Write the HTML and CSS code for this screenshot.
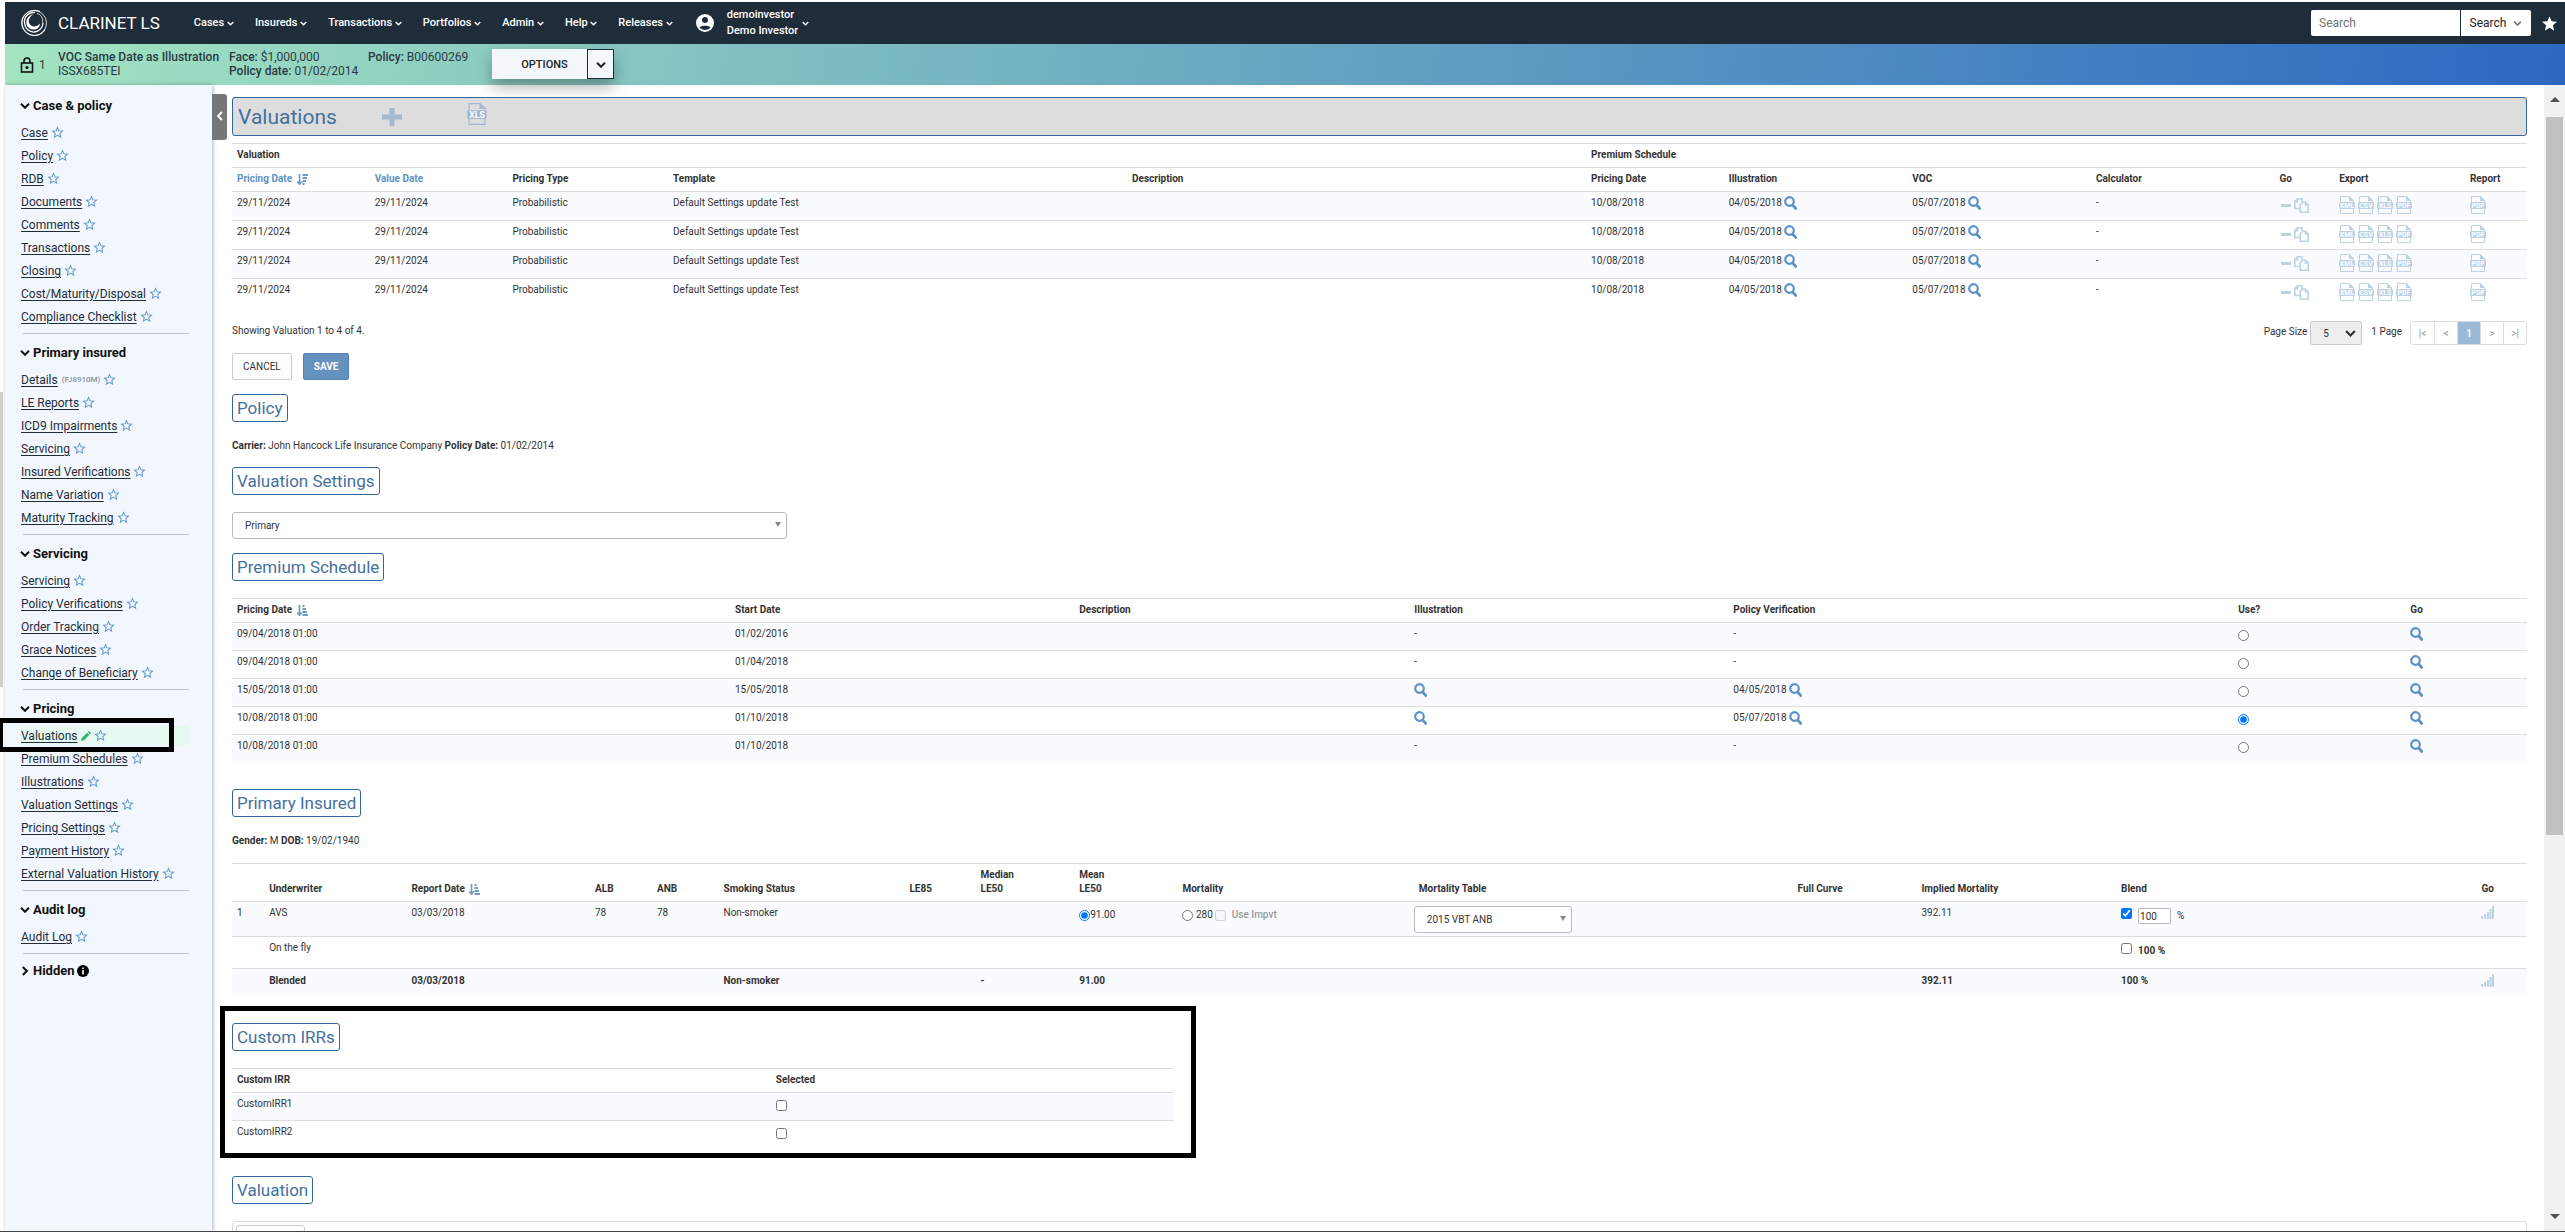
FILE: index.html
```html
<!DOCTYPE html>
<html lang="en">
<head>
    <meta charset="UTF-8">
    <meta name="viewport" content="width=device-width, initial-scale=1.0">
    <link rel="stylesheet" href="styles.css">
    <title>Clarinet LS - Valuations</title>
</head>
<body>

<!-- shared icons -->
<svg class="sprite" aria-hidden="true">
    <symbol id="chevron" viewBox="0 0 10 6"><path d="M1 .8l4 4 4-4" fill="none" stroke="currentColor" stroke-width="2"/></symbol>
    <symbol id="star" viewBox="0 0 24 24"><path d="M22 9.24l-7.19-.62L12 2 9.19 8.63 2 9.24l5.46 4.73L5.82 21 12 17.27 18.18 21l-1.63-7.03L22 9.24zM12 15.4l-3.76 2.27 1-4.28-3.32-2.88 4.38-.38L12 6.1l1.71 4.04 4.38.38-3.32 2.88 1 4.28L12 15.4z" fill="currentColor"/></symbol>
    <symbol id="search" viewBox="0 0 13 14"><circle cx="5.5" cy="5.5" r="4.3" fill="none" stroke="currentColor" stroke-width="2.2"/><path d="M8.6 9l3.200 3.500" stroke="currentColor" stroke-width="2.600" stroke-linecap="round"/></symbol>
    <symbol id="file" viewBox="0 0 16 18"><path d="M1.5 6V.5h9l4 4V6M1.5 13v4.500h13V13" fill="none" stroke="currentColor"/><path d="M10 0v5h5z" fill="currentColor"/><rect y="6" width="16" height="7" rx="1" fill="currentColor"/></symbol>
    <symbol id="copy" viewBox="0 0 15 15"><path d="M6 10.500H.8V3.500L3.500.8h4.500V4M3.500.8v3H.8M6.200 14.200V6.800L8.800 4.200h2.800l2.600 2.600v7.400zM11.500 4.200V7h2.700" fill="none" stroke="currentColor" stroke-width="1.600"/></symbol>
    <symbol id="bars" viewBox="0 0 13 13"><path d="M0 10h2v3H0zM3 8h2v5H3zM6 6h2v7H6zM8.500 3h2v10h-2zM11 0h2v13h-2z" fill="currentColor"/></symbol>
    <symbol id="sort-desc" viewBox="0 0 11 11"><path d="M2.500 0v10M.3 7.500l2.200 2.700 2.200-2.700" fill="none" stroke="currentColor" stroke-width="1.700"/><path d="M5.500 0H11v2H5.500zM5.500 3h4.500v2H5.500zM5.500 6H9v2H5.500zM5.500 9h2v2h-2z" fill="currentColor"/></symbol>
    <symbol id="sort-asc" viewBox="0 0 11 11"><path d="M2.500 0v10M.3 7.500l2.200 2.700 2.200-2.700" fill="none" stroke="currentColor" stroke-width="1.700"/><path d="M5.500 0h2v2h-2zM5.500 3H9v2H5.500zM5.500 6h4.500v2H5.500zM5.500 9H11v2H5.500z" fill="currentColor"/></symbol>
</svg>

<div class="app">
    <header class="topbar">
        <svg class="logo" viewBox="0 0 28 28" fill="none" stroke="#fff">
            <circle cx="14" cy="14" r="12.500" stroke-width=".8"/>
            <path d="M20 2.500C12-1 3 4 2 13c0 7 5 13 12 13.500 5 0 9-2 11-6" stroke-width="1"/>
            <path d="M15 3.500C8 3 4 8 4.500 14c.5 5.500 5 9.500 10 9 5-.5 8.500-4.500 8.500-9.500" stroke-width="1.300"/>
            <path d="M14 5c-4 2-6.500 6-4.500 9.800 2 3.700 7.500 3.700 10.500-.3-.5 4.500-3.500 6.500-7 6C8 20 5.500 16 6.500 11.500 7.500 8 10 5.500 14 5z" fill="#fff" stroke="none"/>
            <path d="M17 4.500c4 1 6 4.500 5.500 8.500" stroke-width=".8"/>
        </svg>
        <span class="brand">CLARINET LS</span>
        <nav class="menu">
            <a href="#">Cases <svg class="chev"><use href="#chevron"/></svg></a>
            <a href="#">Insureds <svg class="chev"><use href="#chevron"/></svg></a>
            <a href="#">Transactions <svg class="chev"><use href="#chevron"/></svg></a>
            <a href="#">Portfolios <svg class="chev"><use href="#chevron"/></svg></a>
            <a href="#">Admin <svg class="chev"><use href="#chevron"/></svg></a>
            <a href="#">Help <svg class="chev"><use href="#chevron"/></svg></a>
            <a href="#">Releases <svg class="chev"><use href="#chevron"/></svg></a>
        </nav>
        <a href="#" class="user">
            <svg class="avatar" viewBox="0 0 20 20"><circle cx="10" cy="10" r="9" fill="#fff"/><circle cx="10" cy="7" r="3" fill="#1f2c39"/><path d="M4.500 14.500c1-2.500 10-2.500 11 0-2.500 3.300-8.500 3.300-11 0z" fill="#1f2c39"/></svg>
            <span>demoinvestor<br>Demo Investor</span>
            <svg class="chev"><use href="#chevron"/></svg>
        </a>
        <form class="search">
            <input type="text" placeholder="Search" aria-label="Search">
            <button type="button">Search <svg class="chev"><use href="#chevron"/></svg></button>
        </form>
        <svg class="fav" viewBox="2 2 20 19"><path d="M12 17.270L18.180 21l-1.640-7.030L22 9.240l-7.190-.61L12 2 9.190 8.630 2 9.240l5.460 4.730L5.820 21z" fill="#fff"/></svg>
    </header>

    <div class="casebar">
        <div class="lock">
            <svg viewBox="0 0 14 16" fill="none" stroke="#111" stroke-width="1.600"><rect x="1.500" y="6" width="11" height="9"/><path d="M4 6V4a3 3 0 0 1 6 0v2"/><circle cx="7" cy="10.500" r=".8" fill="#111"/></svg>
            1
        </div>
        <div class="case-name"><b>VOC Same Date as Illustration</b><br>ISSX685TEI</div>
        <div class="case-face"><b>Face:</b> $1,000,000<br><b>Policy date:</b> 01/02/2014</div>
        <div class="case-policy"><b>Policy:</b> B00600269</div>
        <div class="options">
            <button type="button">OPTIONS</button>
            <button type="button" class="options-more" aria-label="More options"><svg><use href="#chevron"/></svg></button>
        </div>
    </div>

    <div class="body">
        <aside class="sidebar">
            <section>
                <h2><svg><use href="#chevron"/></svg>Case &amp; policy</h2>
                <ul>
                    <li><a href="#">Case</a> <svg><use href="#star"/></svg></li>
                    <li><a href="#">Policy</a> <svg><use href="#star"/></svg></li>
                    <li><a href="#">RDB</a> <svg><use href="#star"/></svg></li>
                    <li><a href="#">Documents</a> <svg><use href="#star"/></svg></li>
                    <li><a href="#">Comments</a> <svg><use href="#star"/></svg></li>
                    <li><a href="#">Transactions</a> <svg><use href="#star"/></svg></li>
                    <li><a href="#">Closing</a> <svg><use href="#star"/></svg></li>
                    <li><a href="#">Cost/Maturity/Disposal</a> <svg><use href="#star"/></svg></li>
                    <li><a href="#">Compliance Checklist</a> <svg><use href="#star"/></svg></li>
                </ul>
            </section>
            <section>
                <h2><svg><use href="#chevron"/></svg>Primary insured</h2>
                <ul>
                    <li><a href="#">Details</a> <small>(FJ8910M)</small> <svg><use href="#star"/></svg></li>
                    <li><a href="#">LE Reports</a> <svg><use href="#star"/></svg></li>
                    <li><a href="#">ICD9 Impairments</a> <svg><use href="#star"/></svg></li>
                    <li><a href="#">Servicing</a> <svg><use href="#star"/></svg></li>
                    <li><a href="#">Insured Verifications</a> <svg><use href="#star"/></svg></li>
                    <li><a href="#">Name Variation</a> <svg><use href="#star"/></svg></li>
                    <li><a href="#">Maturity Tracking</a> <svg><use href="#star"/></svg></li>
                </ul>
            </section>
            <section>
                <h2><svg><use href="#chevron"/></svg>Servicing</h2>
                <ul>
                    <li><a href="#">Servicing</a> <svg><use href="#star"/></svg></li>
                    <li><a href="#">Policy Verifications</a> <svg><use href="#star"/></svg></li>
                    <li><a href="#">Order Tracking</a> <svg><use href="#star"/></svg></li>
                    <li><a href="#">Grace Notices</a> <svg><use href="#star"/></svg></li>
                    <li><a href="#">Change of Beneficiary</a> <svg><use href="#star"/></svg></li>
                </ul>
            </section>
            <section>
                <h2><svg><use href="#chevron"/></svg>Pricing</h2>
                <ul>
                    <li class="current"><a href="#">Valuations</a> <svg class="pencil" viewBox="0 0 12 12"><path d="M0 12l1-3.500L7.500 2 10 4.500 3.500 11zM8.200 1.300L9.500 0 12 2.500l-1.300 1.300z" fill="#2bb673"/></svg><svg><use href="#star"/></svg></li>
                    <li><a href="#">Premium Schedules</a> <svg><use href="#star"/></svg></li>
                    <li><a href="#">Illustrations</a> <svg><use href="#star"/></svg></li>
                    <li><a href="#">Valuation Settings</a> <svg><use href="#star"/></svg></li>
                    <li><a href="#">Pricing Settings</a> <svg><use href="#star"/></svg></li>
                    <li><a href="#">Payment History</a> <svg><use href="#star"/></svg></li>
                    <li><a href="#">External Valuation History</a> <svg><use href="#star"/></svg></li>
                </ul>
            </section>
            <section>
                <h2><svg><use href="#chevron"/></svg>Audit log</h2>
                <ul>
                    <li><a href="#">Audit Log</a> <svg><use href="#star"/></svg></li>
                </ul>
            </section>
            <section class="hidden-links">
                <h2><svg class="closed"><use href="#chevron"/></svg>Hidden<svg class="info" viewBox="0 0 12 12"><circle cx="6" cy="6" r="6"/><path d="M5.200 5h1.600v4.500H5.200zM5.200 2.500h1.600V4H5.200z" fill="#fff"/></svg></h2>
            </section>
        </aside>

        <button type="button" class="collapse" aria-label="Collapse menu"><svg viewBox="0 0 6 10"><path d="M5 1L1 5l4 4" fill="none" stroke="#fff" stroke-width="1.800"/></svg></button>

        <main>
            <div class="title">
                <h1>Valuations</h1>
                <svg class="plus" viewBox="0 0 20 20"><path d="M7.500 1h5v6.500H20v5h-7.500V19h-5v-6.500H0v-5h7.500z" fill="currentColor"/></svg>
                <svg class="title-file" viewBox="0 0 16 18"><use href="#file"/><text x="8" y="12">XLS</text></svg>
            </div>

            <table class="valuations">
                <colgroup>
                    <col class="w6"><col class="w6"><col class="w7"><col class="w20"><col class="w20"><col class="w6">
                    <col class="w8"><col class="w8"><col class="w8"><col class="v-go"><col class="v-export"><col>
                </colgroup>
                <thead>
                    <tr><th colspan="5">Valuation</th><th colspan="7">Premium Schedule</th></tr>
                    <tr>
                        <th><a href="#">Pricing Date</a> <svg class="sort"><use href="#sort-desc"/></svg></th>
                        <th><a href="#">Value Date</a></th><th>Pricing Type</th><th>Template</th><th>Description</th><th>Pricing Date</th>
                        <th>Illustration</th><th>VOC</th><th>Calculator</th><th>Go</th><th>Export</th><th>Report</th>
                    </tr>
                </thead>
                <tbody>
                    <tr>
                        <td>29/11/2024</td><td>29/11/2024</td><td>Probabilistic</td><td>Default Settings update Test</td><td></td><td>10/08/2018</td>
                        <td>04/05/2018 <svg class="mag"><use href="#search"/></svg></td><td>05/07/2018 <svg class="mag"><use href="#search"/></svg></td><td>-</td>
                        <td><div class="faded"><i class="minus"></i><svg class="copy"><use href="#copy"/></svg></div></td>
                        <td><div class="faded files"><svg><use href="#file"/><text x="8" y="12">XML</text></svg><svg><use href="#file"/><text x="8" y="12">CSV</text></svg><svg><use href="#file"/><text x="8" y="12">XLS</text></svg><svg><use href="#file"/><text x="8" y="12">PDF</text></svg></div></td>
                        <td><div class="faded files"><svg><use href="#file"/><text x="8" y="12">PDF</text></svg></div></td>
                    </tr>
                    <tr>
                        <td>29/11/2024</td><td>29/11/2024</td><td>Probabilistic</td><td>Default Settings update Test</td><td></td><td>10/08/2018</td>
                        <td>04/05/2018 <svg class="mag"><use href="#search"/></svg></td><td>05/07/2018 <svg class="mag"><use href="#search"/></svg></td><td>-</td>
                        <td><div class="faded"><i class="minus"></i><svg class="copy"><use href="#copy"/></svg></div></td>
                        <td><div class="faded files"><svg><use href="#file"/><text x="8" y="12">XML</text></svg><svg><use href="#file"/><text x="8" y="12">CSV</text></svg><svg><use href="#file"/><text x="8" y="12">XLS</text></svg><svg><use href="#file"/><text x="8" y="12">PDF</text></svg></div></td>
                        <td><div class="faded files"><svg><use href="#file"/><text x="8" y="12">PDF</text></svg></div></td>
                    </tr>
                    <tr>
                        <td>29/11/2024</td><td>29/11/2024</td><td>Probabilistic</td><td>Default Settings update Test</td><td></td><td>10/08/2018</td>
                        <td>04/05/2018 <svg class="mag"><use href="#search"/></svg></td><td>05/07/2018 <svg class="mag"><use href="#search"/></svg></td><td>-</td>
                        <td><div class="faded"><i class="minus"></i><svg class="copy"><use href="#copy"/></svg></div></td>
                        <td><div class="faded files"><svg><use href="#file"/><text x="8" y="12">XML</text></svg><svg><use href="#file"/><text x="8" y="12">CSV</text></svg><svg><use href="#file"/><text x="8" y="12">XLS</text></svg><svg><use href="#file"/><text x="8" y="12">PDF</text></svg></div></td>
                        <td><div class="faded files"><svg><use href="#file"/><text x="8" y="12">PDF</text></svg></div></td>
                    </tr>
                    <tr>
                        <td>29/11/2024</td><td>29/11/2024</td><td>Probabilistic</td><td>Default Settings update Test</td><td></td><td>10/08/2018</td>
                        <td>04/05/2018 <svg class="mag"><use href="#search"/></svg></td><td>05/07/2018 <svg class="mag"><use href="#search"/></svg></td><td>-</td>
                        <td><div class="faded"><i class="minus"></i><svg class="copy"><use href="#copy"/></svg></div></td>
                        <td><div class="faded files"><svg><use href="#file"/><text x="8" y="12">XML</text></svg><svg><use href="#file"/><text x="8" y="12">CSV</text></svg><svg><use href="#file"/><text x="8" y="12">XLS</text></svg><svg><use href="#file"/><text x="8" y="12">PDF</text></svg></div></td>
                        <td><div class="faded files"><svg><use href="#file"/><text x="8" y="12">PDF</text></svg></div></td>
                    </tr>
                </tbody>
            </table>

            <div class="table-foot">
                <span class="showing">Showing Valuation 1 to 4 of 4.</span>
                <label for="page-size">Page Size</label>
                <span class="page-size">
                    <select id="page-size"><option>5</option></select>
                    <svg><use href="#chevron"/></svg>
                </span>
                <span class="page-count">1 Page</span>
                <div class="pager">
                    <button type="button">|&lt;</button><button type="button">&lt;</button><button type="button" class="active">1</button><button type="button">&gt;</button><button type="button">&gt;|</button>
                </div>
            </div>

            <div class="actions">
                <button type="button">CANCEL</button>
                <button type="button" class="save">SAVE</button>
            </div>

            <h3>Policy</h3>
            <p><b>Carrier:</b> John Hancock Life Insurance Company <b>Policy Date:</b> 01/02/2014</p>

            <h3>Valuation Settings</h3>
            <div class="dropdown settings">
                <select aria-label="Valuation Settings"><option>Primary</option></select>
            </div>

            <h3>Premium Schedule</h3>
            <table class="schedule">
                <colgroup><col class="s-date"><col class="s-start"><col class="s-desc"><col class="s-ill"><col class="s-ver"><col class="s-use"><col></colgroup>
                <thead>
                    <tr><th>Pricing Date <svg class="sort"><use href="#sort-asc"/></svg></th><th>Start Date</th><th>Description</th><th>Illustration</th><th>Policy Verification</th><th>Use?</th><th>Go</th></tr>
                </thead>
                <tbody>
                    <tr><td>09/04/2018 01:00</td><td>01/02/2016</td><td></td><td>-</td><td>-</td><td><input type="radio" name="use" aria-label="Use schedule 1"></td><td><svg class="mag"><use href="#search"/></svg></td></tr>
                    <tr><td>09/04/2018 01:00</td><td>01/04/2018</td><td></td><td>-</td><td>-</td><td><input type="radio" name="use" aria-label="Use schedule 2"></td><td><svg class="mag"><use href="#search"/></svg></td></tr>
                    <tr><td>15/05/2018 01:00</td><td>15/05/2018</td><td></td><td><svg class="mag"><use href="#search"/></svg></td><td>04/05/2018 <svg class="mag"><use href="#search"/></svg></td><td><input type="radio" name="use" aria-label="Use schedule 3"></td><td><svg class="mag"><use href="#search"/></svg></td></tr>
                    <tr><td>10/08/2018 01:00</td><td>01/10/2018</td><td></td><td><svg class="mag"><use href="#search"/></svg></td><td>05/07/2018 <svg class="mag"><use href="#search"/></svg></td><td><input type="radio" name="use" aria-label="Use schedule 4" checked></td><td><svg class="mag"><use href="#search"/></svg></td></tr>
                    <tr><td>10/08/2018 01:00</td><td>01/10/2018</td><td></td><td>-</td><td>-</td><td><input type="radio" name="use" aria-label="Use schedule 5"></td><td><svg class="mag"><use href="#search"/></svg></td></tr>
                </tbody>
            </table>

            <h3>Primary Insured</h3>
            <p><b>Gender:</b> M <b>DOB:</b> 19/02/1940</p>
            <table class="insured">
                <colgroup>
                    <col class="i-num"><col class="i-under"><col class="i-report"><col class="i-alb"><col class="i-anb"><col class="i-smoke"><col class="i-le85"><col class="i-median">
                    <col class="i-mean"><col class="i-mort"><col class="i-table"><col class="i-curve"><col class="i-implied"><col class="i-blend"><col>
                </colgroup>
                <thead>
                    <tr>
                        <th></th><th>Underwriter</th><th>Report Date <svg class="sort"><use href="#sort-asc"/></svg></th><th>ALB</th><th>ANB</th><th>Smoking Status</th><th>LE85</th><th>Median<br>LE50</th>
                        <th>Mean<br>LE50</th><th>Mortality</th><th>Mortality Table</th><th>Full Curve</th><th>Implied Mortality</th><th>Blend</th><th>Go</th>
                    </tr>
                </thead>
                <tbody>
                    <tr class="avs">
                        <td>1</td><td>AVS</td><td>03/03/2018</td><td>78</td><td>78</td><td>Non-smoker</td><td></td><td></td>
                        <td><label><input type="radio" name="basis" checked>91.00</label></td>
                        <td><label><input type="radio" name="basis"> 280</label> <label class="impvt"><input type="checkbox" disabled> Use Impvt</label></td>
                        <td class="cell-select"><div class="dropdown"><select aria-label="Mortality Table"><option>2015 VBT ANB</option></select></div></td>
                        <td></td><td>392.11</td>
                        <td><div class="blend"><input type="checkbox" aria-label="Blend AVS" checked><input type="text" value="100" aria-label="Blend percent">%</div></td>
                        <td><svg class="bars"><use href="#bars"/></svg></td>
                    </tr>
                    <tr class="fly">
                        <td></td><td>On the fly</td><td></td><td></td><td></td><td></td><td></td><td></td><td></td><td></td><td></td><td></td><td></td>
                        <td><label class="blend"><input type="checkbox"><b>100 %</b></label></td><td></td>
                    </tr>
                    <tr class="blended">
                        <td></td><td>Blended</td><td>03/03/2018</td><td></td><td></td><td>Non-smoker</td><td></td><td>-</td><td>91.00</td><td></td><td></td><td></td><td>392.11</td><td>100 %</td>
                        <td><svg class="bars"><use href="#bars"/></svg></td>
                    </tr>
                </tbody>
            </table>

            <section class="framed">
                <h3>Custom IRRs</h3>
                <table class="irrs">
                    <thead><tr><th>Custom IRR</th><th>Selected</th></tr></thead>
                    <tbody>
                        <tr><td>CustomIRR1</td><td><input type="checkbox" aria-label="CustomIRR1"></td></tr>
                        <tr><td>CustomIRR2</td><td><input type="checkbox" aria-label="CustomIRR2"></td></tr>
                    </tbody>
                </table>
            </section>

            <h3>Valuation</h3>
            <div class="panel"><div class="panel-tab"></div></div>
        </main>

        <div class="scrollbar">
            <i class="up"></i>
            <div class="thumb"></div>
            <i class="down"></i>
        </div>
    </div>
</div>

</body>
</html>
```

FILE: styles.css
```css
* {
    box-sizing: border-box;
}

body {
    margin: 0;
    font-family: Roboto, sans-serif;
    font-size: 10px;
    line-height: 14px;
    color: #333;
    background-color: #fff;
}

button, input, select {
    font-family: inherit;
    font-size: inherit;
    color: inherit;
    margin: 0;
}

b, th {
    font-weight: 700;
}

.sprite {
    display: none;
}

.app {
    display: flex;
    flex-direction: column;
    height: 100vh;
    padding: 2px 0 0 5px;
    overflow: hidden;
    border-bottom: 1px solid #444;
    background: linear-gradient(#d0cfc8, #d0cfc8) 0 392px / 3px 295px no-repeat;
}

/* top bar */
.topbar {
    display: flex;
    align-items: center;
    flex: none;
    height: 42px;
    padding: 0 8px 0 15px;
    background-color: #1f2c39;
    color: #fff;
    font-size: 11px;
}

.topbar a {
    color: #fff;
    text-decoration: none;
}

.logo {
    width: 28px;
    height: 28px;
}

.brand {
    margin-left: 10px;
    font-size: 17px;
}

.menu {
    display: flex;
    gap: 21px;
    margin-left: 34px;
    font-weight: 500;
}

.chev {
    width: 7px;
    height: 5px;
    vertical-align: middle;
}

.user {
    display: flex;
    align-items: center;
    margin-left: 22px;
    line-height: 16px;
    font-weight: 500;
}

.avatar {
    width: 20px;
    height: 20px;
    margin-right: 12px;
}

.user .chev {
    margin-left: 4px;
}

.search {
    display: flex;
    gap: 1px;
    margin-left: auto;
    margin-right: 11px;
    font-size: 12px;
}

.search input {
    width: 149px;
    height: 26px;
    padding: 0 8px;
    border: 0;
    border-radius: 2px 0 0 2px;
}

.search button {
    width: 70px;
    height: 26px;
    padding: 0;
    border: 0;
    border-radius: 0 2px 2px 0;
    background-color: #fff;
    color: #222;
}

.search .chev {
    width: 9px;
    margin-left: 4px;
    color: #777;
}

.fav {
    width: 15px;
    height: 15px;
}

/* case bar */
.casebar {
    display: flex;
    flex: none;
    height: 41px;
    padding: 5px 15px;
    background: linear-gradient(100deg, #a3e4c1, #2c68c1);
    font-size: 12px;
    color: #2b3a42;
}

.lock {
    display: flex;
    align-items: center;
    gap: 5px;
    width: 38px;
}

.lock svg {
    width: 14px;
    height: 16px;
}

.case-name {
    width: 171px;
    padding-top: 1px;
}

.case-face {
    width: 139px;
    padding-top: 1px;
}

.case-policy {
    width: 124px;
    padding-top: 1px;
}

.casebar b {
    font-weight: 500;
}

.options {
    display: flex;
    height: 30px;
    font-size: 11px;
    box-shadow: 0 8px 16px rgba(0, 0, 0, 0.3);
}

.options button {
    width: 95px;
    padding: 0 0 0 10px;
    border: 0;
    background-color: #f3f7fc;
    color: #222;
    font-weight: 500;
}

.options .options-more {
    width: 27px;
    padding: 0;
    border: 1px solid #1f2c39;
}

.options-more svg {
    width: 10px;
    height: 6px;
}

/* layout below the bars */
.body {
    display: flex;
    flex: 1;
    min-height: 0;
    align-items: flex-start;
}

.sidebar {
    flex: none;
    align-self: stretch;
    width: 207px;
    padding-top: 2px;
    background-color: #f2f7fe;
    box-shadow: 1px 0 4px rgba(0, 0, 0, 0.3);
}

.sidebar section {
    margin: 0 23px 0 18px;
    padding: 8px 0 5px;
    border-bottom: 1px solid #c3c8d0;
}

.sidebar .hidden-links {
    padding-top: 6px;
    border-bottom: 0;
}

.sidebar h2 {
    display: flex;
    align-items: center;
    height: 22px;
    margin: 0 0 4px -3px;
    font-size: 13px;
    font-weight: 700;
    color: #111;
}

.sidebar h2 svg {
    width: 10px;
    height: 6px;
    margin-right: 3px;
}

.sidebar h2 .closed {
    transform: rotate(-90deg);
}

.sidebar h2 .info {
    width: 12px;
    height: 12px;
    margin: 0 0 0 2px;
}

.sidebar ul {
    list-style: none;
    margin: 0 0 0 -2px;
    padding: 0;
}

.sidebar li {
    display: flex;
    align-items: center;
    gap: 2px;
    height: 23px;
    font-size: 12px;
}

.sidebar li a {
    color: #1f2c39;
    text-underline-offset: 2px;
}

.sidebar li svg {
    width: 15px;
    height: 15px;
    color: #6497cb;
}

.sidebar li .pencil {
    width: 10px;
    height: 10px;
    margin-left: 2px;
}

.sidebar small {
    margin-left: 2px;
    font-size: 8px;
    font-weight: 500;
    color: #8a929b;
}

.sidebar .current {
    position: relative;
    background: linear-gradient(#e5f9f0, #e5f9f0) 0 2px / auto 19px no-repeat;
}

.sidebar .current::before {
    content: "";
    position: absolute;
    inset: -6px 15px -5px -23px;
    border: 5px solid #000;
}

.collapse {
    flex: none;
    width: 15px;
    height: 46px;
    margin: 9px 5px 0 0;
    padding: 0;
    border: 0;
    border-radius: 0 3px 3px 0;
    background-color: #777;
    z-index: 1;
}

.collapse svg {
    width: 6px;
    height: 10px;
}

main {
    flex: 1;
    min-width: 0;
    padding: 12px 17px 0 0;
}

/* headings */
.title {
    display: flex;
    align-items: center;
    height: 39px;
    margin-bottom: 7px;
    padding: 0 5px;
    border: 1px solid #336699;
    border-radius: 3px;
    background-color: #ddd;
    color: #a3b9d1;
}

.title h1 {
    width: 144px;
    margin: 0;
    font-size: 21px;
    font-weight: 400;
    color: #44719d;
}

.plus {
    width: 20px;
    height: 20px;
}

.title-file {
    width: 20px;
    height: 22px;
    margin: 0 0 5px 65px;
}

h3 {
    width: fit-content;
    height: 28px;
    margin: 14px 0 17px;
    padding: 0 4px;
    border: 1px solid #336699;
    border-radius: 3px;
    font-size: 17px;
    font-weight: 400;
    line-height: 26px;
    color: #44719d;
}

p {
    margin: 0;
}

/* tables */
table {
    width: 100%;
    table-layout: fixed;
    border-spacing: 0;
}

th, td {
    height: 28px;
    padding: 4px 5px 0;
    border-top: 1px solid #ddd;
    text-align: left;
    vertical-align: top;
}

th {
    height: 24px;
}

thead a {
    color: #5c92c6;
    text-decoration: none;
}

tbody tr:nth-child(odd) {
    background-color: #f9fbff;
}

.sort {
    width: 11px;
    height: 11px;
    margin-left: 2px;
    color: #6d9bc8;
    vertical-align: middle;
}

.mag {
    width: 13px;
    height: 14px;
    color: #5c92c6;
    vertical-align: middle;
}

.valuations td {
    height: 29px;
}

.w6 { width: 6%; }
.w7 { width: 7%; }
.w8 { width: 8%; }
.w20 { width: 20%; }
.v-go { width: 2.6%; }
.v-export { width: 5.7%; }

.faded {
    display: flex;
    align-items: center;
    gap: 3px;
    height: 18px;
    color: #bed2e6;
}

.minus {
    width: 10px;
    height: 3px;
    margin-left: 2px;
    background-color: #bed2e6;
}

.copy {
    width: 15px;
    height: 15px;
}

.files svg {
    flex: none;
    width: 16px;
    height: 18px;
}

svg text {
    font-size: 7px;
    font-weight: 700;
    text-anchor: middle;
    fill: #fff;
}

.table-foot {
    display: flex;
    margin-top: 14px;
    line-height: 22px;
}

.showing {
    flex: 1;
    line-height: 20px;
}

.page-size {
    position: relative;
    margin: 0 9px 0 3px;
}

.page-size select {
    display: block;
    width: 52px;
    height: 24px;
    padding: 0 12px;
    border: 1px solid #ccc;
    border-radius: 2px;
    background-color: #eee;
    appearance: none;
}

.page-size svg {
    position: absolute;
    right: 6px;
    top: 9px;
    width: 11px;
    height: 7px;
}

.pager {
    display: flex;
    height: 24px;
    margin-left: 8px;
    border: 1px solid #ddd;
    border-radius: 3px;
}

.pager button {
    width: 23px;
    padding: 0;
    border: 0;
    border-left: 1px solid #ddd;
    background-color: #fff;
    color: #999;
}

.pager button:first-child {
    border-left: 0;
}

.pager .active {
    background-color: #9ab9d8;
    color: #fff;
    font-weight: 700;
}

.actions {
    display: flex;
    gap: 11px;
    margin-top: 8px;
}

.actions button {
    height: 27px;
    padding: 0 10px;
    border: 1px solid #ccc;
    border-radius: 2px;
    background-color: #fff;
}

.actions .save {
    border-color: #4f83b8;
    background-color: #6591bf;
    color: #fff;
    font-weight: 700;
}

.dropdown {
    position: relative;
}

.dropdown::after {
    content: "";
    position: absolute;
    right: 6px;
    top: 10px;
    border: 3px solid transparent;
    border-top: 5px solid #888;
    border-bottom: 0;
}

.dropdown select {
    display: block;
    width: 100%;
    height: 27px;
    padding: 0 12px;
    border: 1px solid #bbb;
    border-radius: 3px;
    background-color: #fff;
    appearance: none;
}

.settings {
    width: 555px;
}

input[type="radio"], input[type="checkbox"] {
    width: 11px;
    height: 11px;
    vertical-align: middle;
}

.schedule {
    margin-bottom: 27px;
}

.schedule input {
    margin-top: 3px;
}

.s-date { width: 21.7%; }
.s-start { width: 15%; }
.s-desc { width: 14.6%; }
.s-ill { width: 13.9%; }
.s-ver { width: 22%; }
.s-use { width: 7.5%; }

.insured {
    margin-top: 15px;
}

.insured th {
    height: 38px;
    vertical-align: bottom;
    padding-bottom: 5px;
}

.insured .avs td {
    height: 35px;
}

.avs label {
    line-height: 18px;
}

.insured .fly td {
    height: 32px;
}

.insured .blended td {
    height: 26px;
    padding-top: 5px;
    font-weight: 700;
}

.insured .cell-select {
    padding-left: 0;
}

.cell-select .dropdown {
    width: 158px;
}

.i-num { width: 1.4%; }
.i-under { width: 6.2%; }
.i-report { width: 8%; }
.i-alb { width: 2.7%; }
.i-anb { width: 2.9%; }
.i-smoke { width: 8.1%; }
.i-le85 { width: 3.1%; }
.i-median { width: 4.3%; }
.i-mean { width: 4.5%; }
.i-mort { width: 10.3%; }
.i-table { width: 16.5%; }
.i-curve { width: 5.4%; }
.i-implied { width: 8.7%; }
.i-blend { width: 15.7%; }

.impvt {
    color: #999;
    font-weight: 500;
}

.impvt input {
    margin-right: 3px;
}

.blend {
    display: flex;
    gap: 6px;
    padding-top: 2px;
    line-height: 16px;
}

.blend input[type="text"] {
    width: 33px;
    height: 16px;
    padding: 0 1px;
    border: 1px solid #bbb;
    border-radius: 2px;
}

.bars {
    width: 13px;
    height: 13px;
    color: #bed2e6;
}

/* black frame around the custom rates */
.framed {
    width: 976px;
    margin: 12px 0 18px -12px;
    padding: 12px 17px 5px 7px;
    border: 5px solid #000;
}

.framed h3 {
    margin-top: 0;
}

.irrs th:first-child {
    width: 57.2%;
}

.irrs input {
    margin-top: 3px;
}

.panel {
    height: 60px;
    padding: 3px;
    border: 1px solid #ddd;
    border-radius: 3px;
}

.panel-tab {
    width: 69px;
    height: 30px;
    border: 1px solid #ccc;
    border-radius: 3px;
}

/* scroll bar */
.scrollbar {
    display: flex;
    flex-direction: column;
    align-items: center;
    align-self: stretch;
    flex: none;
    width: 21px;
    padding: 12px 0;
    background-color: #f1f1f1;
}

.up, .down {
    border: 5px solid transparent;
    border-top: 0;
    border-bottom: 5px solid #505050;
}

.thumb {
    width: 17px;
    height: 64%;
    margin: 15px 0 auto;
    background-color: #c1c1c1;
}

.down {
    border-top: 5px solid #505050;
    border-bottom: 0;
}
```
